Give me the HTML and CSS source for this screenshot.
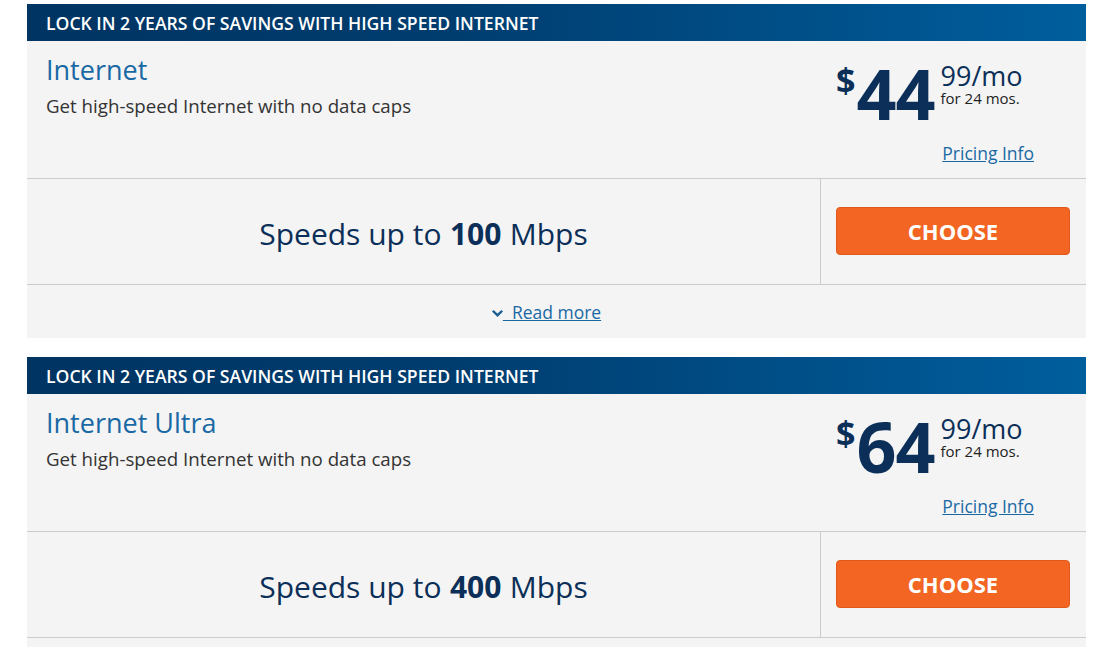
FILE: index.html
```html
<!DOCTYPE html>
<html lang="en">
<head>
<meta charset="utf-8">
<title>Internet Plans</title>
<link rel="stylesheet" href="styles.css">
</head>
<body>
<main class="plans">
  <section class="card">
    <header class="card-head">LOCK IN 2 YEARS OF SAVINGS WITH HIGH SPEED INTERNET</header>
    <div class="card-top">
      <div class="info">
        <h2 class="title">Internet</h2>
        <p class="sub">Get high-speed Internet with no data caps</p>
      </div>
      <div class="pricing">
        <div class="price">
          <span class="dollar">$</span>
          <span class="amount">44</span>
          <span class="cents-col">
            <span class="cents">99/mo</span>
            <span class="term">for 24 mos.</span>
          </span>
        </div>
        <a class="pinfo" href="#">Pricing Info</a>
      </div>
    </div>
    <div class="card-mid">
      <div class="speed">Speeds up to <b>100</b> Mbps</div>
      <div class="action"><button class="choose">CHOOSE</button></div>
    </div>
    <div class="card-more">
      <a class="more" href="#"><svg class="chev" width="11" height="7" viewBox="0 0 11 7"><path d="M0 1.6 L1.6 0 L5.5 3.6 L9.4 0 L11 1.6 L5.5 7 Z" fill="#1b5f94"/></svg>  Read more</a>
    </div>
  </section>

  <section class="card">
    <header class="card-head">LOCK IN 2 YEARS OF SAVINGS WITH HIGH SPEED INTERNET</header>
    <div class="card-top">
      <div class="info">
        <h2 class="title">Internet Ultra</h2>
        <p class="sub">Get high-speed Internet with no data caps</p>
      </div>
      <div class="pricing">
        <div class="price">
          <span class="dollar">$</span>
          <span class="amount">64</span>
          <span class="cents-col">
            <span class="cents">99/mo</span>
            <span class="term">for 24 mos.</span>
          </span>
        </div>
        <a class="pinfo" href="#">Pricing Info</a>
      </div>
    </div>
    <div class="card-mid">
      <div class="speed">Speeds up to <b>400</b> Mbps</div>
      <div class="action"><button class="choose">CHOOSE</button></div>
    </div>
    <div class="card-more">
      <a class="more" href="#"><svg class="chev" width="11" height="7" viewBox="0 0 11 7"><path d="M0 1.6 L1.6 0 L5.5 3.6 L9.4 0 L11 1.6 L5.5 7 Z" fill="#1b5f94"/></svg>  Read more</a>
    </div>
  </section>
</main>
</body>
</html>
```

FILE: styles.css
```css
* { box-sizing: border-box; }
html, body { margin: 0; padding: 0; background: #fff; }
body {
  font-family: "Open Sans", "Liberation Sans", sans-serif;
  color: #333;
  overflow: hidden;
}
.plans {
  padding: 4px 0 0 27px;
  width: 1086px;
}
.card {
  background: #f4f4f4;
  margin-bottom: 19px;
}
.card-head {
  height: 37px;
  display: flex;
  align-items: center;
  padding-left: 19px;
  background: linear-gradient(to right, #003462 0%, #003d6f 40%, #005e9d 100%);
  color: #fff;
  font-size: 17.6px;
  font-weight: 600;
  letter-spacing: 0;
}
.card-top {
  display: flex;
  justify-content: space-between;
  border-bottom: 1px solid #cbcbcb;
  height: 138px;
}
.info {
  padding: 13px 0 0 19px;
}
.title {
  margin: 0;
  font-size: 27px;
  line-height: 32px;
  font-weight: 400;
  color: #1a69a4;
}
.sub {
  margin: 8px 0 0;
  font-size: 18.7px;
  line-height: 24px;
  color: #333;
}
.pricing {
  width: 265px;
  padding: 17px 52px 0 15px;
  display: flex;
  flex-direction: column;
}
.price {
  display: flex;
  align-items: flex-start;
  color: #0b2f58;
}
.dollar {
  font-size: 34px;
  line-height: 34px;
  font-weight: 700;
  margin-top: 5px;
  margin-right: 1px;
}
.amount {
  font-size: 70px;
  line-height: 70px;
  font-weight: 700;
  letter-spacing: -1px;
}
.cents-col {
  display: flex;
  flex-direction: column;
  margin-top: 6px;
  margin-left: 6px;
}
.cents {
  font-size: 27px;
  line-height: 24px;
  color: #0b2f58;
}
.term {
  font-size: 15px;
  line-height: 16px;
  margin-top: 2px;
  color: #222;
}
.pinfo {
  margin-top: 13px;
  align-self: flex-end;
  font-size: 17.5px;
  line-height: 24px;
  color: #1a69a4;
  text-decoration: underline;
}
.card-mid {
  display: flex;
  height: 106px;
  border-bottom: 1px solid #cbcbcb;
}
.speed {
  flex: 1;
  display: flex;
  align-items: center;
  justify-content: center;
  border-right: 1px solid #cbcbcb;
  font-size: 30px;
  color: #0b2f58;
  padding-top: 4px;
}
.speed b {
  font-weight: 700;
  margin: 0 0.28em;
}
.action {
  width: 265px;
  display: flex;
  align-items: center;
  padding: 0 15px 0 15px;
}
.choose {
  width: 234px;
  height: 48px;
  border: 1px solid #e0591c;
  border-radius: 4px;
  background: #f26522;
  color: #fff;
  font-family: "Open Sans", "Liberation Sans", sans-serif;
  font-size: 22px;
  font-weight: 700;
  margin-top: -2px;
}
.card-more {
  height: 53px;
  display: flex;
  align-items: center;
  justify-content: center;
  padding-right: 20px;
}
.more {
  display: inline-block;
  color: #1a69a4;
  font-size: 17.5px;
  line-height: 24px;
  text-decoration: underline;
  white-space: pre;
}
.chev {
  vertical-align: middle;
  margin-bottom: 1px;
}
```
